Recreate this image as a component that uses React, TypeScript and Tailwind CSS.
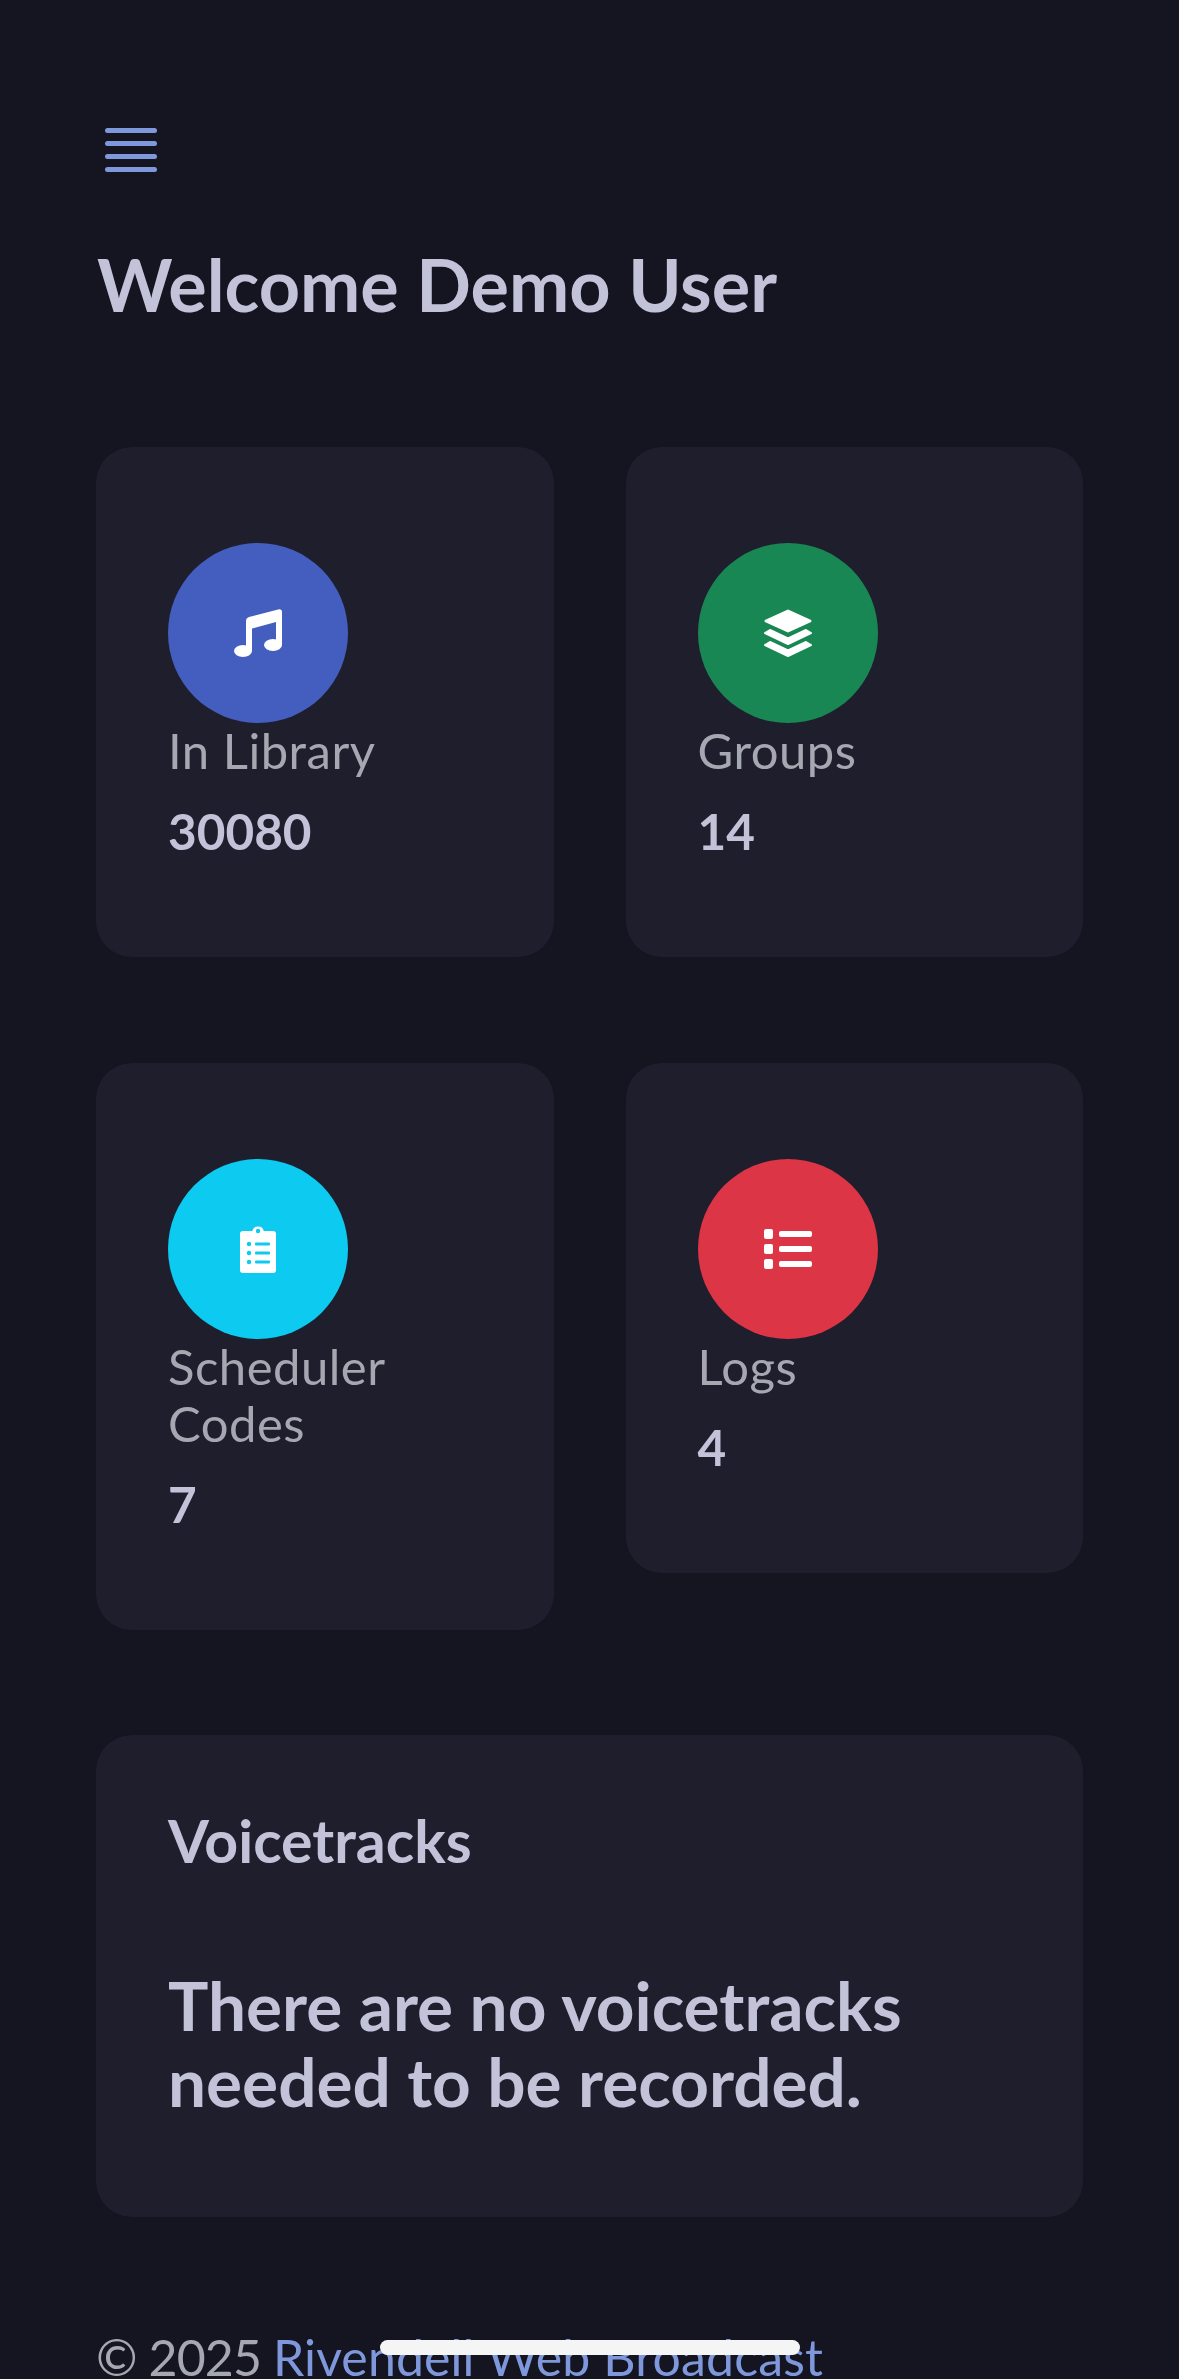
import React from 'react';

const MusicIcon = () => (
  <svg width="48" height="48" viewBox="0 0 48 48" fill="#fff">
    <ellipse cx="9" cy="42" rx="9" ry="6" />
    <ellipse cx="39" cy="36" rx="9" ry="6" />
    <path d="M12 12Q12 9 15 8L45 .2Q48 0 48 3V36H42V13L18 19.5V42H12Z" />
  </svg>
);

const StackIcon = () => (
  <svg width="48" height="48" viewBox="0 0 48 48" fill="#fff" stroke="#fff" strokeLinejoin="round">
    <path strokeWidth="3" d="M2 12 24 2 46 12 24 22Z" />
    <path strokeWidth="2" d="M6 21 24 29.5 42 21 47 24 24 35 1 24Z" />
    <path strokeWidth="2" d="M6 33 24 41.5 42 33 47 36 24 47 1 36Z" />
  </svg>
);

const ClipboardIcon = () => (
  <svg width="36" height="48" viewBox="0 0 36 48">
    <path
      fill="#fff"
      d="M3 6H12.2A6 6 0 0 1 23.8 6H33Q36 6 36 9V45Q36 48 33 48H3Q0 48 0 45V9Q0 6 3 6Z"
    />
    <circle cx="18" cy="6" r="2.2" fill="#0dcaf0" />
    <g fill="#0dcaf0">
      <circle cx="9" cy="19" r="2.2" />
      <circle cx="9" cy="28" r="2.2" />
      <circle cx="9" cy="37" r="2.2" />
      <rect x="15" y="17.5" width="15" height="3" rx="1" />
      <rect x="15" y="26.5" width="15" height="3" rx="1" />
      <rect x="15" y="35.5" width="15" height="3" rx="1" />
    </g>
  </svg>
);

const ListIcon = () => (
  <svg width="48" height="48" viewBox="0 0 48 48" fill="#fff">
    <rect x="0" y="4" width="9" height="10" rx="2" />
    <rect x="0" y="19" width="9" height="10" rx="2" />
    <rect x="0" y="34" width="9" height="10" rx="2" />
    <rect x="15" y="6" width="33" height="6" rx="2" />
    <rect x="15" y="21" width="33" height="6" rx="2" />
    <rect x="15" y="36" width="33" height="6" rx="2" />
  </svg>
);

const StatCard = ({ icon, color, label, value }: { icon: React.ReactNode; color: string; label: React.ReactNode; value: string }) => (
  <div className="bg-[#1e1e2d] rounded-[36px] px-[72px] pt-[96px] pb-[97px]">
    <div className={`w-[180px] h-[180px] rounded-full flex items-center justify-center ${color}`}>{icon}</div>
    <div className="text-[49px] leading-[57px] text-[#a5a7b1] tracking-[0.5px] -mt-[1px]">{label}</div>
    <div className="text-[49.5px] leading-[58px] font-bold text-[#c2c2d9] mt-[23px]">{value}</div>
  </div>
);

export default function App() {
  return (
    <div className="relative h-[2379px] overflow-hidden bg-[#151521] px-[96px] pt-[128px] font-['Lato','Noto_Sans',sans-serif]">
      <button className="flex flex-col gap-[8px] w-[52px] ml-[9px]" aria-label="Menu">
        <span className="block h-[5px] rounded-full bg-[#7f98db]" />
        <span className="block h-[5px] rounded-full bg-[#7f98db]" />
        <span className="block h-[5px] rounded-full bg-[#7f98db]" />
        <span className="block h-[5px] rounded-full bg-[#7f98db]" />
      </button>

      <h3 className="text-[72px] leading-[86px] font-bold text-[#c2c2d9] mt-[69px] ml-[1px]">Welcome Demo User</h3>

      <div className="grid grid-cols-2 gap-x-[72px] items-start mt-[120px]">
        <StatCard icon={<MusicIcon />} color="bg-[#435ebe]" label="In Library" value="30080" />
        <StatCard icon={<StackIcon />} color="bg-[#198754]" label="Groups" value="14" />
      </div>

      <div className="grid grid-cols-2 gap-x-[72px] items-start mt-[106px]">
        <StatCard icon={<ClipboardIcon />} color="bg-[#0dcaf0]" label={<>Scheduler<br />Codes</>} value="7" />
        <StatCard icon={<ListIcon />} color="bg-[#dc3545]" label="Logs" value="4" />
      </div>

      <div className="bg-[#1e1e2d] rounded-[36px] px-[72px] pt-[70px] h-[482px] mt-[105px]">
        <h4 className="text-[59px] leading-[72px] font-bold text-[#c2c2d9]">Voicetracks</h4>
        <h3 className="text-[67.5px] leading-[76px] font-bold text-[#c2c2d9] mt-[90px]">
          There are no voicetracks needed to be recorded.
        </h3>
      </div>

      <footer className="text-[50px] leading-[58px] text-[#a5a7b1] tracking-[-0.9px] mt-[111px]">
        © 2025 <a className="text-[#7f98db] tracking-[0.13px]">Rivendell Web Broadcast</a>
      </footer>

      <div className="absolute left-[380px] top-[2340px] w-[420px] h-[15px] rounded-full bg-[#f5f5f5]" />
    </div>
  );
}
